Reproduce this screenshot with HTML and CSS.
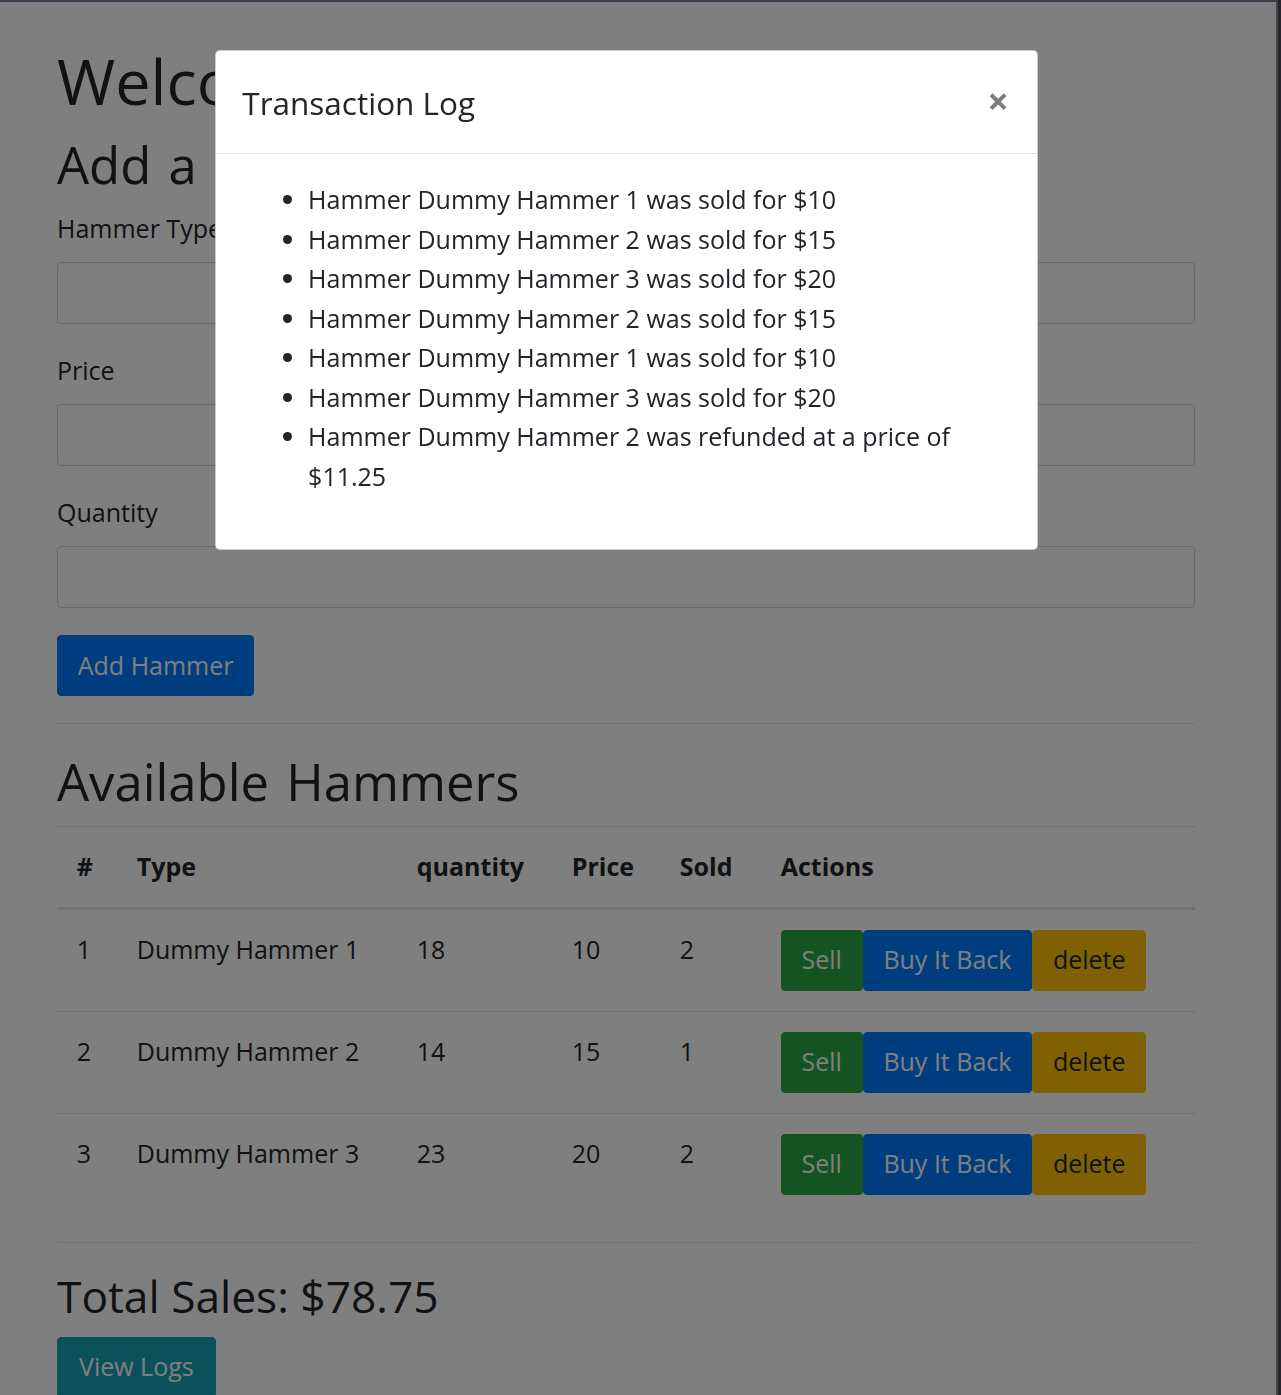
FILE: index.html
```html
<!DOCTYPE html>
<html lang="en">
<head>
<meta charset="utf-8">
<title>Hammer Store</title>
<link rel="stylesheet" href="styles.css">
</head>
<body class="modal-open">
  <div class="container">
    <h1 class="page-title">Welcome to the Hammer Store</h1>
    <h2 class="section-title">Add a Hammer</h2>
    <form class="hammer-form">
      <div class="form-group">
        <label class="form-label" for="type">Hammer Type</label>
        <input class="form-control" id="type" type="text">
      </div>
      <div class="form-group">
        <label class="form-label" for="price">Price</label>
        <input class="form-control" id="price" type="text">
      </div>
      <div class="form-group">
        <label class="form-label" for="qty">Quantity</label>
        <input class="form-control" id="qty" type="text">
      </div>
      <button class="btn btn-primary" type="button">Add Hammer</button>
    </form>
    <hr class="divider">
    <h2 class="section-title">Available Hammers</h2>
    <table class="table">
      <thead>
        <tr>
          <th class="col-num">#</th>
          <th class="col-type">Type</th>
          <th class="col-qty">quantity</th>
          <th class="col-price">Price</th>
          <th class="col-sold">Sold</th>
          <th class="col-actions">Actions</th>
        </tr>
      </thead>
      <tbody>
        <tr>
          <td>1</td><td>Dummy Hammer 1</td><td>18</td><td>10</td><td>2</td>
          <td class="actions"><button class="btn btn-success" type="button">Sell</button><button class="btn btn-primary" type="button">Buy It Back</button><button class="btn btn-warning" type="button">delete</button></td>
        </tr>
        <tr>
          <td>2</td><td>Dummy Hammer 2</td><td>14</td><td>15</td><td>1</td>
          <td class="actions"><button class="btn btn-success" type="button">Sell</button><button class="btn btn-primary" type="button">Buy It Back</button><button class="btn btn-warning" type="button">delete</button></td>
        </tr>
        <tr>
          <td>3</td><td>Dummy Hammer 3</td><td>23</td><td>20</td><td>2</td>
          <td class="actions"><button class="btn btn-success" type="button">Sell</button><button class="btn btn-primary" type="button">Buy It Back</button><button class="btn btn-warning" type="button">delete</button></td>
        </tr>
      </tbody>
    </table>
    <hr class="divider">
    <h3 class="total">Total Sales: $78.75</h3>
    <button class="btn btn-info" type="button">View Logs</button>
  </div>

  <div class="backdrop"></div>

  <div class="modal">
    <div class="modal-dialog">
      <div class="modal-content">
        <div class="modal-header">
          <h5 class="modal-title">Transaction Log</h5>
          <button class="close" type="button" aria-label="Close"><span>&times;</span></button>
        </div>
        <div class="modal-body">
          <ul class="log-list">
            <li>Hammer Dummy Hammer 1 was sold for $10</li>
            <li>Hammer Dummy Hammer 2 was sold for $15</li>
            <li>Hammer Dummy Hammer 3 was sold for $20</li>
            <li>Hammer Dummy Hammer 2 was sold for $15</li>
            <li>Hammer Dummy Hammer 1 was sold for $10</li>
            <li>Hammer Dummy Hammer 3 was sold for $20</li>
            <li>Hammer Dummy Hammer 2 was refunded at a price of $11.25</li>
          </ul>
        </div>
      </div>
    </div>
  </div>

  <div class="frame-top"></div>
  <div class="frame-right"></div>
</body>
</html>
```

FILE: styles.css
```css
* {
  box-sizing: border-box;
}

html, body {
  margin: 0;
  padding: 0;
}

body {
  font-family: "Open Sans", "Noto Sans", sans-serif;
  font-size: 25px;
  line-height: 39.5px;
  color: #212529;
  background: #fff;
}

.modal-open {
  overflow: hidden;
  height: 1395px;
}

.container {
  width: 1138px;
  margin-left: 57px;
  padding-top: 41px;
}

.page-title {
  margin: 0 0 13px;
  font-size: 63px;
  line-height: 79px;
  font-weight: 500;
  white-space: nowrap;
}

.section-title {
  margin: 0 0 13px;
  font-size: 50.8px;
  line-height: 63px;
  font-weight: 500;
  word-spacing: 4px;
  white-space: nowrap;
}

.hammer-form {
  margin: 0;
}

.form-group {
  margin-bottom: 27px;
}

.form-label {
  display: block;
  height: 40px;
  margin-bottom: 13px;
}

.form-control {
  display: block;
  width: 100%;
  height: 62px;
  padding: 9.75px 19.75px;
  font: inherit;
  color: #495057;
  background: #fff;
  border: 1px solid #ced4da;
  border-radius: 4px;
}

.btn {
  display: inline-block;
  font-family: inherit;
  font-size: 25px;
  line-height: 39.5px;
  font-weight: 400;
  padding: 9.75px 19.75px;
  border: 1px solid transparent;
  border-radius: 4px;
  cursor: pointer;
  vertical-align: top;
  white-space: nowrap;
}

.btn-primary {
  color: #fff;
  background: #007bff;
  border-color: #007bff;
}

.btn-success {
  color: #fff;
  background: #28a745;
  border-color: #28a745;
}

.btn-warning {
  color: #212529;
  background: #ffc107;
  border-color: #ffc107;
}

.btn-info {
  color: #fff;
  background: #17a2b8;
  border-color: #17a2b8;
  padding-left: 21px;
  padding-right: 21px;
}

.divider {
  margin: 27px 0 26px;
  border: 0;
  border-top: 1px solid rgba(0, 0, 0, 0.1);
  height: 0;
}

.table {
  width: 100%;
  border-collapse: collapse;
  table-layout: fixed;
  margin-bottom: 26px;
  color: #212529;
}

.table th,
.table td {
  padding: 20px 19.75px;
  border-top: 1px solid #dee2e6;
  text-align: left;
  vertical-align: top;
  white-space: nowrap;
}

.table thead th {
  vertical-align: bottom;
  border-bottom: 3px solid #dee2e6;
  font-weight: 700;
}

.col-num { width: 60px; }
.col-type { width: 280px; }
.col-qty { width: 155px; }
.col-price { width: 108px; }
.col-sold { width: 101px; }
.col-actions { width: 434px; }

.actions {
  font-size: 0;
}

.total {
  margin: 0 0 13px;
  font-size: 44.3px;
  line-height: 55px;
  font-weight: 500;
}

/* overlay layers */
.backdrop {
  position: fixed;
  top: 0;
  left: 0;
  right: 5px;
  bottom: 0;
  background: rgba(0, 0, 0, 0.5);
}

.modal {
  position: fixed;
  top: 0;
  left: 0;
  right: 0;
  bottom: 0;
  padding: 50px 0 0 215px;
}

.modal-dialog {
  width: 823px;
}

.modal-content {
  background: #fff;
  border: 1px solid rgba(0, 0, 0, 0.2);
  border-radius: 5px;
}

.modal-header {
  display: flex;
  align-items: flex-start;
  justify-content: space-between;
  padding: 26.3px;
  border-bottom: 1px solid #dee2e6;
}

.modal-title {
  margin: 0;
  font-size: 31.5px;
  line-height: 49.4px;
  font-weight: 500;
  position: relative;
  top: 1px;
}

.close {
  margin: -26.3px -26.3px -26.3px auto;
  padding: 30px 28px 22.6px 26.3px;
  background: transparent;
  border: 0;
  font-family: inherit;
  font-size: 38px;
  line-height: 1;
  font-weight: 700;
  color: #000;
  text-shadow: 0 1px 0 #fff;
  opacity: 0.5;
  cursor: pointer;
}

.modal-body {
  padding: 26.3px;
}

.log-list {
  margin: 0 0 26.3px;
  padding-left: 65.8px;
}

.frame-top {
  position: fixed;
  top: 0;
  left: 0;
  right: 0;
  height: 2px;
  background: #3a3f4e;
}

.frame-right {
  position: fixed;
  top: 0;
  right: 0;
  bottom: 0;
  width: 5px;
  background: linear-gradient(to right, #444 0 2px, #23262f 2px 100%);
}
```
